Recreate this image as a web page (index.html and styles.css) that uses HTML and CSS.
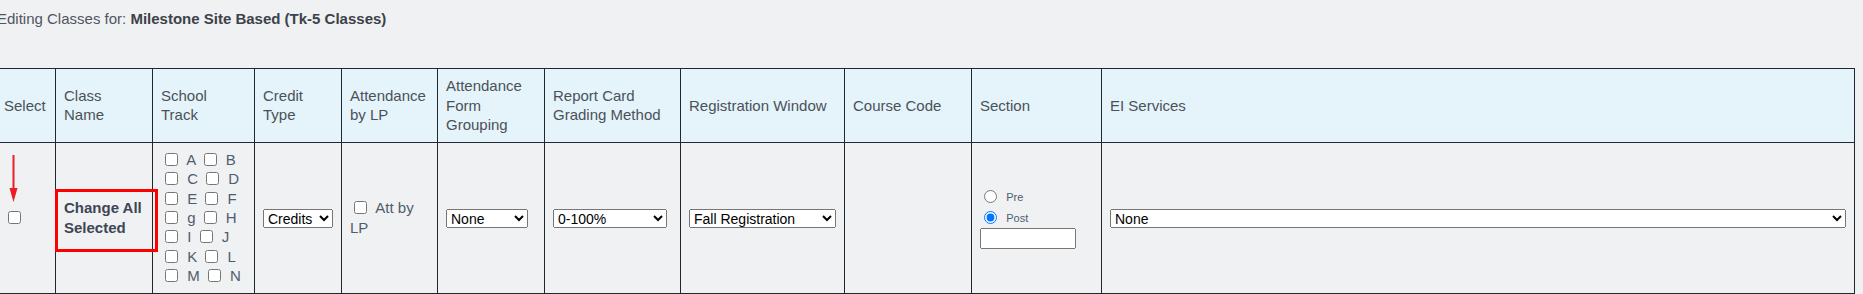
FILE: index.html
```html
<!DOCTYPE html>
<html lang="en">
<head>
<meta charset="utf-8">
<title>Editing Classes</title>
<link rel="stylesheet" href="styles.css">
</head>
<body>
<div class="page">
  <p class="title">Editing Classes for: <b>Milestone Site Based (Tk-5 Classes)</b></p>

  <table class="grid">
    <colgroup>
      <col class="c-select"><col class="c-name"><col class="c-track"><col class="c-credit">
      <col class="c-attlp"><col class="c-group"><col class="c-grading"><col class="c-reg">
      <col class="c-code"><col class="c-section"><col class="c-ei">
    </colgroup>
    <thead>
      <tr>
        <th>Select</th>
        <th>Class<br>Name</th>
        <th>School<br>Track</th>
        <th>Credit<br>Type</th>
        <th>Attendance<br>by LP</th>
        <th>Attendance<br>Form<br>Grouping</th>
        <th>Report Card<br>Grading Method</th>
        <th>Registration Window</th>
        <th>Course Code</th>
        <th>Section</th>
        <th>EI Services</th>
      </tr>
    </thead>
    <tbody>
      <tr>
        <td><input type="checkbox" class="chk"></td>
        <td class="name">Change All<br>Selected</td>
        <td class="track">
          <div><input type="checkbox" class="chk"> A <input type="checkbox" class="chk">&nbsp;B</div>
          <div><input type="checkbox" class="chk"> C <input type="checkbox" class="chk">&nbsp;D</div>
          <div><input type="checkbox" class="chk"> E <input type="checkbox" class="chk">&nbsp;F</div>
          <div><input type="checkbox" class="chk"> g <input type="checkbox" class="chk">&nbsp;H</div>
          <div><input type="checkbox" class="chk"> I <input type="checkbox" class="chk">&nbsp;J</div>
          <div><input type="checkbox" class="chk"> K <input type="checkbox" class="chk">&nbsp;L</div>
          <div><input type="checkbox" class="chk"> M <input type="checkbox" class="chk">&nbsp;N</div>
        </td>
        <td>
          <select class="sel sel-credit"><option>Credits</option></select>
        </td>
        <td class="att"><input type="checkbox" class="chk"> Att by<br>LP</td>
        <td>
          <select class="sel sel-group"><option>None</option></select>
        </td>
        <td>
          <select class="sel sel-grading"><option>0-100%</option></select>
        </td>
        <td>
          <select class="sel sel-reg"><option>Fall Registration</option></select>
        </td>
        <td></td>
        <td class="section">
          <div class="radio-row"><input type="radio" name="sec" class="rad"> <span class="small">Pre</span></div>
          <div class="radio-row"><input type="radio" name="sec" class="rad" checked> <span class="small">Post</span></div>
          <input type="text" class="sec-input">
        </td>
        <td>
          <select class="sel sel-ei"><option>None</option></select>
        </td>
      </tr>
    </tbody>
  </table>

  <div class="callout-box"></div>
  <svg class="callout-arrow" width="12" height="50" viewBox="0 0 12 50" aria-hidden="true">
    <line x1="5.5" y1="1" x2="5.5" y2="36" stroke="#ec1c24" stroke-width="2"/>
    <polygon points="1.5,34 9.5,34 5.5,48" fill="#ec1c24"/>
  </svg>
</div>
</body>
</html>
```

FILE: styles.css
```css
html, body {
  margin: 0;
  padding: 0;
  background: #f0f1f3;
}

body {
  font-family: "Liberation Sans", Arial, sans-serif;
  font-size: 15px;
  line-height: 19.33px;
  color: #4b5158;
  overflow: hidden;
}

.page {
  position: relative;
  height: 294px;
}

.title {
  margin: 0 0 0 -3px;
  padding-top: 9.4px;
  height: 19.33px;
  color: #50565e;
}

.title b {
  color: #3c424a;
}

.grid {
  margin-top: 39.3px;
  margin-left: -5px;
  width: 1859px;
  border-collapse: collapse;
  table-layout: fixed;
}

.c-select { width: 60px; }
.c-name { width: 97px; }
.c-track { width: 102px; }
.c-credit { width: 87px; }
.c-attlp { width: 96px; }
.c-group { width: 107px; }
.c-grading { width: 136px; }
.c-reg { width: 164px; }
.c-code { width: 127px; }
.c-section { width: 130px; }
.c-ei { width: 753px; }

.grid th,
.grid td {
  border: 1px solid #1f2a30;
  padding: 7.33px 8px;
  vertical-align: middle;
  text-align: left;
}

.grid th {
  background: #e5f4fb;
  font-weight: normal;
  color: #4b5158;
}

.grid td {
  color: #4f5d6e;
}

.grid td.name {
  font-weight: bold;
  color: #3d4654;
}

.chk {
  width: 13px;
  height: 13px;
  margin: 0 5px 0 4px;
  vertical-align: -1px;
}

.rad {
  width: 13px;
  height: 13px;
  margin: 0 5px 0 4px;
  vertical-align: -2px;
}

.track div {
  white-space: nowrap;
}

.small {
  font-size: 11px;
}

.radio-row {
  white-space: nowrap;
}

.sec-input {
  display: block;
  box-sizing: border-box;
  width: 96px;
  height: 21px;
  margin: 0;
  font-family: "Liberation Sans", Arial, sans-serif;
  font-size: 13px;
}

.sel {
  font-family: "Liberation Sans", Arial, sans-serif;
  font-size: 14px;
  color: #000;
  height: 19px;
  margin: 0;
  vertical-align: middle;
}

.sel-credit { width: 70px; }
.sel-group { width: 82px; }
.sel-grading { width: 114px; }
.sel-reg { width: 147px; }
.sel-ei { width: 100%; }

.callout-box {
  position: absolute;
  left: 55px;
  top: 189px;
  width: 103px;
  height: 63px;
  box-sizing: border-box;
  border: 3px solid #f00;
}

.callout-arrow {
  position: absolute;
  left: 8px;
  top: 154px;
}
```
